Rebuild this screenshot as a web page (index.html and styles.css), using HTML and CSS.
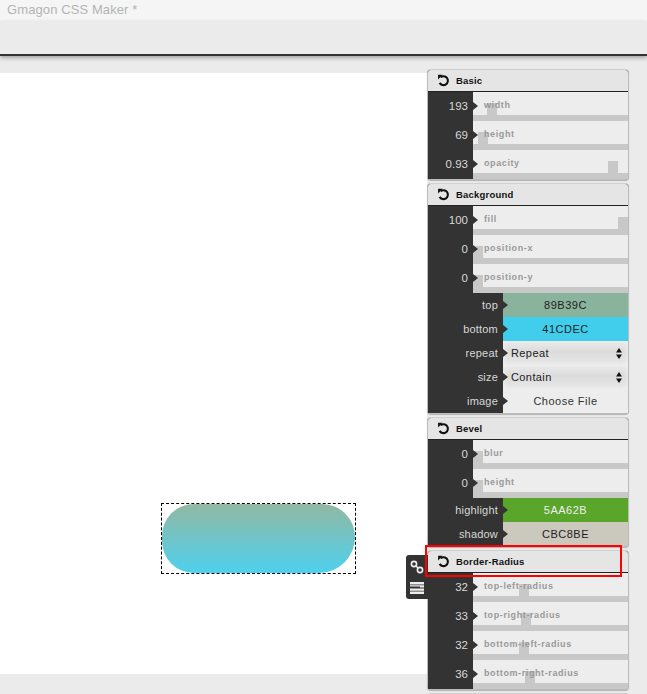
FILE: index.html
```html
<!DOCTYPE html>
<html lang="en">
<head>
  <meta charset="UTF-8">
  <meta name="viewport" content="width=device-width, initial-scale=1.0">
  <title>Gmagon CSS Maker</title>
  <link rel="stylesheet" href="styles.css">
</head>
<body>

  <div class="title-bar">Gmagon CSS Maker *</div>
  <div class="toolbar"></div>

  <div class="workspace">
    <div class="canvas">
      <div class="selection">
        <div class="shape"></div>
      </div>
    </div>

    <div class="side">

      <!-- Basic -->
      <section class="panel">
        <h3 class="panel-head">
          <svg class="reset" viewBox="0 0 12 12"><path d="M3.2 3.1 A4.1 4.1 0 1 1 2.4 8.2" /><path class="tip" d="M1 .8 L5.2 .8 L1 5 Z" /></svg>
          Basic
        </h3>
        <div class="row"><div class="val">193</div><div class="slider"><span class="name">width</span><i class="thumb" style="left: 14px"></i></div></div>
        <div class="row"><div class="val">69</div><div class="slider"><span class="name">height</span><i class="thumb" style="left: 5px"></i></div></div>
        <div class="row"><div class="val">0.93</div><div class="slider"><span class="name">opacity</span><i class="thumb" style="left: 135px"></i></div></div>
      </section>

      <!-- Background -->
      <section class="panel">
        <h3 class="panel-head">
          <svg class="reset" viewBox="0 0 12 12"><path d="M3.2 3.1 A4.1 4.1 0 1 1 2.4 8.2" /><path class="tip" d="M1 .8 L5.2 .8 L1 5 Z" /></svg>
          Background
        </h3>
        <div class="row"><div class="val">100</div><div class="slider"><span class="name">fill</span><i class="thumb" style="left: 145px"></i></div></div>
        <div class="row"><div class="val">0</div><div class="slider"><span class="name">position-x</span><i class="thumb" style="left: 0"></i></div></div>
        <div class="row"><div class="val">0</div><div class="slider"><span class="name">position-y</span><i class="thumb" style="left: 0"></i></div></div>
        <div class="row short"><div class="val wide">top</div><div class="swatch sw-top">89B39C</div></div>
        <div class="row short"><div class="val wide">bottom</div><div class="swatch sw-bottom">41CDEC</div></div>
        <div class="row short"><div class="val wide">repeat</div><div class="pick">Repeat<svg class="updown" viewBox="0 0 6 11"><path d="M3 0 L6 4.4 L0 4.4 Z M3 11 L6 6.6 L0 6.6 Z" /></svg></div></div>
        <div class="row short"><div class="val wide">size</div><div class="pick">Contain<svg class="updown" viewBox="0 0 6 11"><path d="M3 0 L6 4.4 L0 4.4 Z M3 11 L6 6.6 L0 6.6 Z" /></svg></div></div>
        <div class="row short"><div class="val wide">image</div><div class="swatch sw-file">Choose File</div></div>
      </section>

      <!-- Bevel -->
      <section class="panel">
        <h3 class="panel-head">
          <svg class="reset" viewBox="0 0 12 12"><path d="M3.2 3.1 A4.1 4.1 0 1 1 2.4 8.2" /><path class="tip" d="M1 .8 L5.2 .8 L1 5 Z" /></svg>
          Bevel
        </h3>
        <div class="row"><div class="val">0</div><div class="slider"><span class="name">blur</span><i class="thumb" style="left: 0"></i></div></div>
        <div class="row"><div class="val">0</div><div class="slider"><span class="name">height</span><i class="thumb" style="left: 0"></i></div></div>
        <div class="row short"><div class="val wide">highlight</div><div class="swatch sw-high">5AA62B</div></div>
        <div class="row short"><div class="val wide">shadow</div><div class="swatch sw-shadow">CBC8BE</div></div>
      </section>

      <!-- Border-Radius -->
      <section class="panel panel-radius">
        <h3 class="panel-head">
          <svg class="reset" viewBox="0 0 12 12"><path d="M3.2 3.1 A4.1 4.1 0 1 1 2.4 8.2" /><path class="tip" d="M1 .8 L5.2 .8 L1 5 Z" /></svg>
          Border-Radius
        </h3>
        <div class="row"><div class="val">32</div><div class="slider"><span class="name">top-left-radius</span><i class="thumb" style="left: 46px"></i></div></div>
        <div class="row"><div class="val">33</div><div class="slider"><span class="name">top-right-radius</span><i class="thumb" style="left: 48px"></i></div></div>
        <div class="row"><div class="val">32</div><div class="slider"><span class="name">bottom-left-radius</span><i class="thumb" style="left: 46px"></i></div></div>
        <div class="row"><div class="val">36</div><div class="slider"><span class="name">bottom-right-radius</span><i class="thumb" style="left: 52px"></i></div></div>

        <div class="side-tab">
          <svg class="tab-icon" viewBox="0 0 14 14"><circle cx="4" cy="4" r="2.6" /><circle cx="10" cy="10" r="2.6" /><path d="M5.8 5.8 L8.2 8.2" /></svg>
          <svg class="tab-icon" viewBox="0 0 14 12"><path class="bars" d="M0 0 H14 V2.4 H0 Z M0 3.2 H14 V5.6 H10 V4.6 H0 Z M0 6.4 H14 V8.8 H0 Z M0 9.6 H14 V12 H0 Z" /></svg>
        </div>
        <div class="callout"></div>
      </section>

      <section class="panel">
        <h3 class="panel-head"></h3>
      </section>

    </div>
  </div>

</body>
</html>
```

FILE: styles.css
```css
html, body {
  height: 694px;
  overflow: hidden;
}

body {
  font-family: "Liberation Sans", Arial, sans-serif;
  margin: 0;
  padding: 0;
  background-color: #ebebeb;
  color: #333;
}

.title-bar {
  height: 21px;
  line-height: 20px;
  padding-left: 7px;
  font-size: 13px;
  letter-spacing: 0.1px;
  background-color: #f5f5f5;
  color: #b4b4b4;
}

.toolbar {
  height: 33px;
  background-color: #ebebeb;
  border-bottom: 2px solid #333;
  box-shadow: 0 2px 4px rgba(0, 0, 0, 0.3);
  position: relative;
}

.workspace {
  display: flex;
  align-items: flex-start;
}

.canvas {
  position: relative;
  width: 427px;
  height: 601px;
  margin-top: 17px;
  background-color: #fff;
  flex: none;
}

/* selection sits at its place on the free canvas */
.selection {
  position: absolute;
  left: 161px;
  top: 430px;
  border: 1px dashed #000;
}

.shape {
  width: 193px;
  height: 69px;
  border-radius: 32px 33px 36px 32px;
  background: linear-gradient(#89b39c, #41cdec);
  opacity: 0.93;
}

.side {
  width: 202px;
  margin-top: 13px;
  flex: none;
}

.panel {
  position: relative;
  margin-bottom: 3px;
  background-color: #333;
  border: 1px solid #bdbdbd;
  border-top-color: #cfcfcf;
  border-radius: 4px;
  box-shadow: 0 1px 1px rgba(0, 0, 0, 0.25);
}

.panel-head {
  display: flex;
  align-items: center;
  height: 21px;
  margin: 0;
  padding-left: 9px;
  font-size: 9.5px;
  font-weight: bold;
  letter-spacing: 0.2px;
  color: #111;
  background-color: #e5e5e5;
  border-bottom: 1px solid #222;
  border-radius: 3px 3px 0 0;
}

.reset {
  width: 13px;
  height: 13px;
  margin-right: 6px;
  fill: none;
  stroke: #111;
  stroke-width: 1.9;
}

.reset .tip {
  fill: #111;
  stroke: none;
}

.row {
  display: flex;
  height: 29px;
}

.row.short {
  height: 24px;
}

.val {
  position: relative;
  flex: none;
  box-sizing: border-box;
  width: 45px;
  padding-right: 5px;
  line-height: 29px;
  font-size: 11.5px;
  text-align: right;
  color: #d8d8d8;
  background-color: #333;
}

.val.wide {
  width: 75px;
  line-height: 25px;
  font-size: 11px;
  letter-spacing: 0.2px;
}

.val::after {
  content: "";
  position: absolute;
  z-index: 1;
  left: 100%;
  top: 10px;
  border-left: 5px solid #333;
  border-top: 4px solid transparent;
  border-bottom: 4px solid transparent;
}

.val.wide::after {
  top: 8px;
}

.slider {
  position: relative;
  flex: 1;
  background-color: #ededed;
  border-bottom: 6px solid #c8c8c8;
}

.name {
  position: absolute;
  left: 11px;
  top: 8px;
  z-index: 1;
  font-size: 9px;
  font-weight: bold;
  letter-spacing: 0.6px;
  color: #999;
}

.thumb {
  position: absolute;
  bottom: 0;
  width: 10px;
  height: 12px;
  background-color: #c8c8c8;
}

.swatch {
  flex: 1;
  line-height: 24px;
  font-size: 11px;
  letter-spacing: 0.5px;
  text-align: center;
  color: #222;
}

.sw-top { background-color: #89b39c; }
.sw-bottom { background-color: #41cdec; }
.sw-high { background-color: #5aa62b; color: #eee; }
.sw-shadow { background-color: #cbc8be; }
.sw-file { background-color: #ededed; color: #333; }

.pick {
  display: flex;
  align-items: center;
  justify-content: space-between;
  flex: 1;
  padding: 0 6px 0 8px;
  font-size: 11px;
  letter-spacing: 0.4px;
  color: #222;
  background: linear-gradient(#e9e9e9, #dcdcdc 45%, #e6e6e6);
  box-shadow: inset 0 0 6px #f2f2f2;
}

.updown {
  width: 6px;
  height: 11px;
  fill: #111;
}

.side-tab {
  position: absolute;
  left: -22px;
  top: 4px;
  display: flex;
  flex-direction: column;
  align-items: center;
  gap: 7px;
  box-sizing: border-box;
  width: 22px;
  height: 44px;
  padding-top: 5px;
  background-color: #333;
  border-radius: 3px 0 0 3px;
}

.tab-icon {
  width: 14px;
  height: 14px;
  fill: none;
  stroke: #eee;
  stroke-width: 1.6;
}

.tab-icon .bars {
  fill: #eee;
  stroke: none;
}

.callout {
  position: absolute;
  left: -3px;
  top: -6px;
  width: 193px;
  height: 28px;
  border: 2px solid #f00;
  pointer-events: none;
}
```
